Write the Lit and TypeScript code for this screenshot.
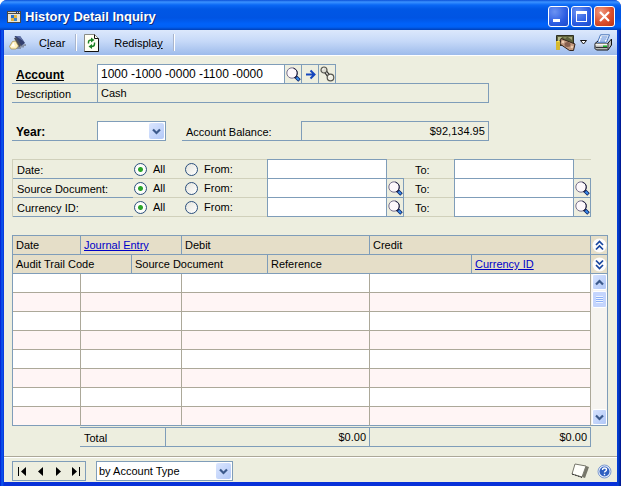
import { LitElement, html, css, svg } from "lit";
import { customElement } from "lit/decorators.js";

const windowIcon = html`<svg class="ico" width="14" height="12" viewBox="0 0 14 12" shape-rendering="crispEdges" aria-hidden="true">
  <rect width="14" height="12" fill="#4a4a48"/><rect x="1" y="1" width="12" height="1" fill="#dcdccf"/>
  <path d="M9 1h1v1H9zM11 1h1v1h-1z" fill="#13307d"/>
  <rect x="1" y="3" width="12" height="8" fill="#e9e6d8"/>
  <rect x="4" y="4" width="3" height="3" fill="#2d72c8"/><rect x="7" y="4" width="3" height="3" fill="#e7b93c"/>
  <rect x="4" y="7" width="3" height="3" fill="#e3b23a"/><rect x="7" y="7" width="3" height="3" fill="#3f86c9"/>
</svg>`;

const eraserIcon = html`<svg class="ico" width="17" height="15" viewBox="0 0 17 15" aria-hidden="true">
  <path d="M6 14l3-4 8-1v2h-2v1.500h-3V14z" fill="#8792a6"/>
  <path d="M5.500 1H11l5 7-4 3z" fill="#33406f"/>
  <path d="M6.500 1H11l4 5.500z" fill="#6273a8"/>
  <path d="M5 3l2-.500 5 7.500-2 2.500z" fill="#4a4d59"/>
  <path d="M3.500 6.500l3-.500L9.500 11 7 14H2L.500 11.500z" fill="#fdf0bd" stroke="#a08a4c" stroke-width=".7"/>
  <path d="M2 11.500l2.500-4L6 11.500z" fill="#fff"/>
</svg>`;

const refreshIcon = html`<svg class="ico" width="15" height="18" viewBox="0 0 15 18" aria-hidden="true">
  <path d="M.5 .5h10l4 4v13H.5z" fill="#fffff4" stroke="#8a8c86"/>
  <path d="M10.500 .5v4h4M14.500 4.500v13H.5" fill="none" stroke="#111"/>
  <path d="M4.500 9.500V8q0-2 3-2" fill="none" stroke="#198022" stroke-width="1.400"/>
  <path d="M7 3.500L10.500 6 7 8.500z" fill="#198022"/>
  <path d="M10.500 8.500V10q0 2.500-3 2.500" fill="none" stroke="#198022" stroke-width="1.400"/>
  <path d="M8 10l-3.500 2.500L8 15z" fill="#198022"/>
</svg>`;

const moneyIcon = html`<svg class="ico" width="21" height="18" viewBox="0 0 21 18" aria-hidden="true">
  <path d="M1.500 1.500h17v10h-17z" fill="#5d613c" stroke="#2f3022"/>
  <path d="M3 3h4L4 7H3z" fill="#b7bb8c"/><path d="M13 3h4v3z" fill="#a5a578"/><path d="M8 3h4l-2 2z" fill="#858a5c"/>
  <path d="M6 4.500l14 5.500-1.500 6.500h-4L5 10z" fill="#c39a80" stroke="#33241c"/>
  <ellipse cx="12.500" cy="10.500" rx="3" ry="2.500" fill="#87604f"/>
  <path d="M7.500 6.500l2 1-1 2-2-1zM16.500 11.500l2 1-1 2-2-1z" fill="#efd0b4"/>
  <rect x="1" y="7" width="4" height="9" rx="1" fill="#ffe244"/>
  <path d="M1 9h4M1 11h4M1 13h4M1 15h4" stroke="#9a7d10" stroke-width=".8"/>
</svg>`;

const printerIcon = html`<svg class="ico" width="19" height="17" viewBox="0 0 19 17" aria-hidden="true">
  <path d="M6.500 .800h9l-3 7.500h-9z" fill="#fff" stroke="#4773b8"/><path d="M7.500 3h6M6.500 5h6M6 7h5" stroke="#4c80d6"/>
  <path d="M1 9.500l3-2.500M14 9l3.500-4v6L14 16H2.500L1 14.500v-5h13z" fill="#b9bbb8" stroke="#111"/>
  <path d="M1.500 9.500h12v2h-12z" fill="#f5f5f1"/><path d="M14 9.500v6M2 13.500h11.500" fill="none" stroke="#333"/>
  <path d="M9 11.500h4V13H9z" fill="#18b42a"/>
</svg>`;

const magnifier = html`<svg class="ico" width="15" height="15" viewBox="0 0 15 15" aria-hidden="true">
  <path d="M9.500 9.500l4 4" stroke="#0b1f60" stroke-width="3.600"/>
  <path d="M10.500 10.500l2.500 2.500" stroke="#3a8bea" stroke-width="2"/>
  <circle cx="6" cy="6" r="5.200" fill="#fdf8fb" stroke="#77718e"/>
  <path d="M7.500 1.200q5 2 3.500 6.800-.800 2-3 3" fill="none" stroke="#1b1b3a"/>
</svg>`;

const goArrow = html`<svg class="ico" width="11" height="11" viewBox="0 0 11 11" aria-hidden="true">
  <path d="M1 5.500h8M5.500 1.500l4 4-4 4" fill="none" stroke="#1546bd" stroke-width="2"/>
</svg>`;

const noteLink = html`<svg class="ico" width="15" height="16" viewBox="0 0 15 16" aria-hidden="true">
  <path d="M5 5l5 6.500" stroke="#222" stroke-width="3.600"/><path d="M5 5l5 6.500" stroke="#d8d8d0" stroke-width="1.400"/>
  <circle cx="4" cy="4" r="3" fill="#dcdcd2" stroke="#55554f" stroke-width="1.200"/>
  <circle cx="10.500" cy="11.500" r="3.300" fill="#efeee4" stroke="#55554f" stroke-width="1.200"/>
  <path d="M2.500 3.500l1.500-1M9 11l1.500-1.500" stroke="#fff"/>
</svg>`;

const chevron = (up: boolean) => html`<svg class="ico" width="9" height="7" viewBox="0 0 9 7" aria-hidden="true">
  <path d=${up ? "M1 5.500L4.500 2L8 5.500" : "M1 1.500L4.500 5L8 1.500"} fill="none" stroke="#3c5a8c" stroke-width="2.200"/>
</svg>`;

const doubleChevron = (up: boolean) => html`<svg class="ico" width="15" height="15" viewBox="0 0 15 15" aria-hidden="true">
  <circle cx="7.500" cy="7.500" r="7" fill="#fdfcfc"/>
  <path d=${up ? "M4 7L7.500 3.500L11 7M4 11.500L7.500 8L11 11.500" : "M4 3.500L7.500 7L11 3.500M4 8L7.500 11.500L11 8"}
    fill="none" stroke="#17459f" stroke-width="1.700"/>
</svg>`;

const noteIcon = html`<svg class="ico" width="19" height="16" viewBox="0 0 19 16" aria-hidden="true">
  <path d="M15 3l3 1-4 11-3-1z" fill="#77776b"/><path d="M4 1l11 2-4 11-10-3z" fill="#fffffb" stroke="#77776c"/>
  <path d="M1 11l10 3.500" stroke="#333" stroke-dasharray="2 1"/>
</svg>`;

const helpIcon = html`<svg class="ico" width="15" height="15" viewBox="0 0 15 15" aria-hidden="true">
  <circle cx="7.500" cy="7.500" r="6.500" fill="#e8effb" stroke="#7f9cd0"/>
  <circle cx="7.500" cy="7.500" r="5" fill="#2f60c0"/>
  <path d="M5.500 6q0-2 2-2t2 1.700q0 1-1.200 1.600-.8.400-.8 1.200M7.500 9.800v1.500" fill="none" stroke="#fff" stroke-width="1.400"/>
</svg>`;

const navShapes = [
  { label: "First", shape: svg`<path d="M1 1h1v9H1zM9 1v9L4 5.500z"/>` },
  { label: "Previous", shape: svg`<path d="M8 1v9L3 5.500z"/>` },
  { label: "Next", shape: svg`<path d="M3 1v9l5-4.500z"/>` },
  { label: "Last", shape: svg`<path d="M1 1v9l5-4.500zM8 1h1v9H8z"/>` },
];

const filters = [
  { id: "date", label: "Date:", lookup: false },
  { id: "source", label: "Source Document:", lookup: true },
  { id: "currency", label: "Currency ID:", lookup: true },
];

@customElement("app-root")
export class AppRoot extends LitElement {
  static styles = css`
    :host {
      display: block;
      font: 11px/14px "Liberation Sans", Arial, sans-serif;
      color: #000;
      --line: #7f9db9;
    }
    * { box-sizing: border-box; }
    button, input, select { font: inherit; color: inherit; margin: 0; border-radius: 0; }
    button { border: 0; padding: 0; background: none; display: flex; align-items: center; justify-content: center; }
    .ico { display: block; flex: none; }
    .window {
      min-height: 100vh;
      display: flex;
      flex-direction: column;
      padding: 0 4px 4px;
      background: linear-gradient(90deg, #0019cf, #0a5af0 2px, #0831d9 4px, #0831d9 calc(100% - 4px), #0144d0 calc(100% - 3px), #00138c);
      border-radius: 7px 7px 0 0;
    }
    .title {
      height: 30px;
      margin: 0 -4px;
      padding: 3px 6px 0 7px;
      display: flex;
      align-items: center;
      border-radius: 7px 7px 0 0;
      background: linear-gradient(#0a50d8, #3b92ff 2px, #0a68f5 5px, #0057e5 9px, #0054e3 18px, #0062fa 24px, #0060f5 27px, #0040b8);
    }
    .title h1 {
      flex: 1;
      margin: 0 0 0 4px;
      font: bold 13px/18px "Liberation Sans", Arial, sans-serif;
      color: #fff;
      text-shadow: 1px 1px #0a2c80;
    }
    .caption { display: flex; gap: 2px; }
    .caption button {
      width: 21px;
      height: 21px;
      border: 1px solid #fff;
      border-radius: 3px;
      background: radial-gradient(circle at 30% 25%, #6c93f2, #2b5ce2 60%, #1c49c8);
    }
    .caption .close { background: radial-gradient(circle at 30% 25%, #f09a80, #dc4f2c 55%, #bb3312); }
    .toolbar {
      height: 26px;
      display: flex;
      align-items: center;
      padding: 0 4px 0 5px;
      border-bottom: 1px solid #fff;
      background: linear-gradient(#dce8fc, #c6d9f8 45%, #9dbbeb);
    }
    .toolbar button { height: 22px; }
    .clear { gap: 13px; }
    .redisplay { gap: 15px; }
    .split { width: 2px; height: 17px; border-left: 1px solid #a9b5cc; border-right: 1px solid #fff; margin: 0 7px 0 10px; }
    .spacer { flex: 1; }
    .money { gap: 4px; margin-right: 7px; }
    .client { flex: 1; display: flex; flex-direction: column; background: #edeedf; }
    .form { padding: 8px 9px 0 8px; }
    .head { width: 80%; }
    .row { display: flex; height: 19px; }
    .row label, .cap { height: 19px; padding: 3px 0 0 4px; border-bottom: 1px solid var(--line); white-space: nowrap; flex: none; }
    .row .key { width: 85px; }
    .strong { font-weight: bold; font-size: 12px; }
    .link { text-decoration: underline; }
    .field {
      height: 20px;
      margin-top: -1px;
      min-width: 0;
      padding: 0 3px;
      border: 1px solid var(--line);
      background: #fff;
      outline: 0;
    }
    .account { width: 188px; font-size: 12px; }
    .plain { background: transparent; flex: 1; }
    .amount { text-align: right; padding-top: 2px; }
    .lookup { width: 17px; height: 20px; margin-top: -1px; flex: none; border: solid var(--line); border-width: 1px 1px 1px 0; }
    .group { border-top: 1px solid transparent; }
    .gap { margin-top: 19px; }
    .combo { position: relative; height: 20px; margin-top: -1px; }
    .combo select { appearance: none; width: 100%; height: 20px; padding: 0 18px 0 2px; border: 1px solid var(--line); background: #fff; }
    .drop {
      position: absolute;
      right: 2px;
      top: 2px;
      width: 15px;
      height: 16px;
      display: flex;
      align-items: center;
      justify-content: center;
      pointer-events: none;
      border-radius: 2px;
      background: linear-gradient(135deg, #dbe6fe, #b3c9f8);
    }
    .year { width: 69px; margin-right: 16px; }
    .row .balance { width: 119px; }
    .filters { min-width: 0; margin: 18px 17px 0 0; padding: 0; border: 0; border-top: 1px solid #d0d0bb; }
    .filter { border-bottom: 1px solid #d0d0bb; border-left: 1px solid #d0d0bb; }
    .filter .name { width: 120px; height: 19px; padding: 3px 0 0 4px; border-bottom: 1px solid var(--line); white-space: nowrap; flex: none; }
    .choices { width: 134px; display: flex; align-items: center; flex: none; }
    .row .choices label { border: 0; padding: 0; height: 14px; width: 32px; margin-left: 6px; }
    .choices input {
      appearance: none;
      flex: none;
      width: 13px;
      height: 13px;
      margin: 0;
      border: 1px solid #2b4f7d;
      border-radius: 50%;
      background: linear-gradient(135deg, #e4e4dc, #fff);
    }
    .choices input:checked { background: radial-gradient(circle, #2aa52a 2px, #fff 3px, #f4f4ee); }
    .choices input:first-child { margin-left: 1px; }
    .filter .field { flex: 1; }
    .row .to { width: 50px; height: 18px; padding: 3px 0 0 11px; border: 0; }
    .slot { width: 17px; flex: none; }
    table { width: 100%; margin-top: 18px; table-layout: fixed; border-collapse: separate; border-spacing: 0; border: solid var(--line); border-width: 1px 0 0 1px; }
    th, td { height: 19px; padding: 0; }
    th {
      padding: 0 0 0 3px;
      text-align: left;
      font-weight: normal;
      background: #e5dec8;
      border: solid var(--line);
      border-width: 0 1px 1px 0;
      white-space: nowrap;
    }
    th:last-child { padding: 0; }
    th:last-child button { width: 16px; height: 18px; }
    a { color: #0000c8; }
    td { border: solid #aca899; border-width: 0 1px 1px 0; background: #fff; }
    .alt td { background: #fff5f5; }
    tbody tr:last-child td, tbody td.scroll { border-bottom-color: var(--line); }
    tbody td.scroll { background: #f6f4f0; border-right-color: var(--line); padding: 0; height: 152px; vertical-align: top; }
    .bar { height: 151px; display: flex; flex-direction: column; align-items: center; }
    .bar button, .thumb { width: 15px; height: 16px; flex: none; border: 1px solid #fff; border-radius: 2px; background: linear-gradient(135deg, #d5e2fe, #b2c8f7); }
    .thumb { height: 17px; margin-top: 1px; padding: 4px 3px; background: #c4d5fd; }
    .grip { height: 7px; background: repeating-linear-gradient(#eef4fe 0 1px, #8cb0f8 1px 2px); }
    .totals { display: flex; margin: 1px 17px 0 68px; border-top: 1px solid var(--line); }
    .totals .cap { width: 85px; }
    .sum { height: 19px; padding: 2px 3px 0 0; text-align: right; border: solid var(--line); border-width: 0 0 1px 1px; }
    .debit { width: 204px; }
    .credit { flex: 1; border-right-width: 1px; }
    .footer { margin-top: 9px; padding: 4px 5px 1px 8px; display: flex; align-items: center; border-top: 1px solid #aca899; box-shadow: inset 0 1px #fff; }
    .nav { display: flex; width: 74px; height: 20px; border: 1px solid var(--line); margin-right: 10px; }
    .nav button { flex: 1; }
    .sort { width: 137px; margin: 0; }
    .tools { display: flex; align-items: center; gap: 7px; }
  `;

  private lookup(label: string) {
    return html`<button class="lookup" aria-label=${label}>${magnifier}</button>`;
  }

  private filterRow(f: { id: string; label: string; lookup: boolean }) {
    return html`<div class="row filter" role="group" aria-label=${f.label}>
      <span class="name">${f.label}</span>
      <span class="choices">
        <input type="radio" id="${f.id}-all" name=${f.id} checked><label for="${f.id}-all">All</label>
        <input type="radio" id="${f.id}-from" name=${f.id}><label for="${f.id}-from">From:</label>
      </span>
      <input class="field" type="text" aria-label="${f.label} from">
      ${f.lookup ? this.lookup(`${f.label} from`) : html`<span class="slot"></span>`}
      <label class="to" for="${f.id}-to">To:</label>
      <input class="field" type="text" id="${f.id}-to">
      ${f.lookup ? this.lookup(`${f.label} to`) : html`<span class="slot"></span>`}
    </div>`;
  }

  private bodyRow(i: number) {
    return html`<tr class=${i % 2 ? "alt" : ""}>
      <td></td><td colspan="2"></td><td colspan="2"></td><td colspan="2"></td>
      ${i === 0
        ? html`<td class="scroll" rowspan="8"><div class="bar">
            <button aria-label="Scroll up">${chevron(true)}</button>
            <div class="thumb"><div class="grip"></div></div>
            <div class="spacer"></div>
            <button aria-label="Scroll down">${chevron(false)}</button>
          </div></td>`
        : ""}
    </tr>`;
  }

  render() {
    return html`<main class="window">
      <header class="title">
        ${windowIcon}
        <h1>History Detail Inquiry</h1>
        <div class="caption">
          <button aria-label="Minimize"><svg width="15" height="15" viewBox="0 0 15 15"><path d="M2 10h7v3H2z" fill="#fff"/></svg></button>
          <button aria-label="Maximize"><svg width="15" height="15" viewBox="0 0 15 15"><path d="M2 2h11v11H2zM3 5v7h9V5z" fill="#fff" fill-rule="evenodd"/></svg></button>
          <button class="close" aria-label="Close"><svg width="15" height="15" viewBox="0 0 15 15"><path d="M3 3l9 9M12 3l-9 9" stroke="#fff" stroke-width="2.200"/></svg></button>
        </div>
      </header>
      <div class="toolbar" role="toolbar">
        <button class="clear">${eraserIcon}<span>C<u>l</u>ear</span></button>
        <span class="split"></span>
        <button class="redisplay">${refreshIcon}<span>Redispla<u>y</u></span></button>
        <span class="split"></span>
        <span class="spacer"></span>
        <button class="money" aria-label="Currency view">${moneyIcon}<svg width="7" height="5" viewBox="0 0 7 5"><path d="M.5 .5h6l-3 3.500z" fill="#fff" stroke="#111"/></svg></button>
        <button aria-label="Print">${printerIcon}</button>
      </div>
      <div class="client">
        <div class="form">
          <div class="head">
            <div class="group">
              <div class="row">
                <label class="key strong" for="account"><span class="link">Account</span></label>
                <input class="field account" id="account" type="text" value="1000 -1000 -0000 -1100 -0000">
                ${this.lookup("Look up account")}
                <button class="lookup" aria-label="Open account">${goArrow}</button>
                <button class="lookup" aria-label="Account link">${noteLink}</button>
              </div>
              <div class="row">
                <label class="key" for="description">Description</label>
                <input class="field plain" id="description" type="text" readonly value="Cash">
              </div>
            </div>
            <div class="row gap">
              <label class="key strong" for="year">Year:</label>
              <div class="combo year"><select id="year"><option></option></select><span class="drop">${chevron(false)}</span></div>
              <label class="balance" for="balance">Account Balance:</label>
              <output class="field plain amount" id="balance">$92,134.95</output>
            </div>
          </div>
          <fieldset class="filters" aria-label="Filters">${filters.map((f) => this.filterRow(f))}</fieldset>
          <table>
            <colgroup>
              <col width="68"><col width="51"><col width="50"><col width="86"><col width="102"><col width="102"><col><col width="17">
            </colgroup>
            <thead>
              <tr>
                <th>Date</th><th colspan="2"><a href="#journal">Journal Entry</a></th><th colspan="2">Debit</th><th colspan="2">Credit</th>
                <th><button aria-label="Collapse lines">${doubleChevron(true)}</button></th>
              </tr>
              <tr>
                <th colspan="2">Audit Trail Code</th><th colspan="2">Source Document</th><th colspan="2">Reference</th><th><a href="#currency">Currency ID</a></th>
                <th><button aria-label="Expand lines">${doubleChevron(false)}</button></th>
              </tr>
            </thead>
            <tbody>${[0, 1, 2, 3, 4, 5, 6, 7].map((i) => this.bodyRow(i))}</tbody>
          </table>
          <div class="totals">
            <span class="cap">Total</span>
            <output class="sum debit">$0.00</output>
            <output class="sum credit">$0.00</output>
          </div>
        </div>
        <footer class="footer">
          <div class="nav">
            ${navShapes.map((n) => html`<button aria-label=${n.label}><svg width="10" height="11" viewBox="0 0 10 11">${n.shape}</svg></button>`)}
          </div>
          <div class="combo sort"><select aria-label="Sort by"><option>by Account Type</option></select><span class="drop">${chevron(false)}</span></div>
          <span class="spacer"></span>
          <div class="tools">
            <button aria-label="Notes">${noteIcon}</button>
            <button aria-label="Help">${helpIcon}</button>
          </div>
        </footer>
      </div>
    </main>`;
  }
}
